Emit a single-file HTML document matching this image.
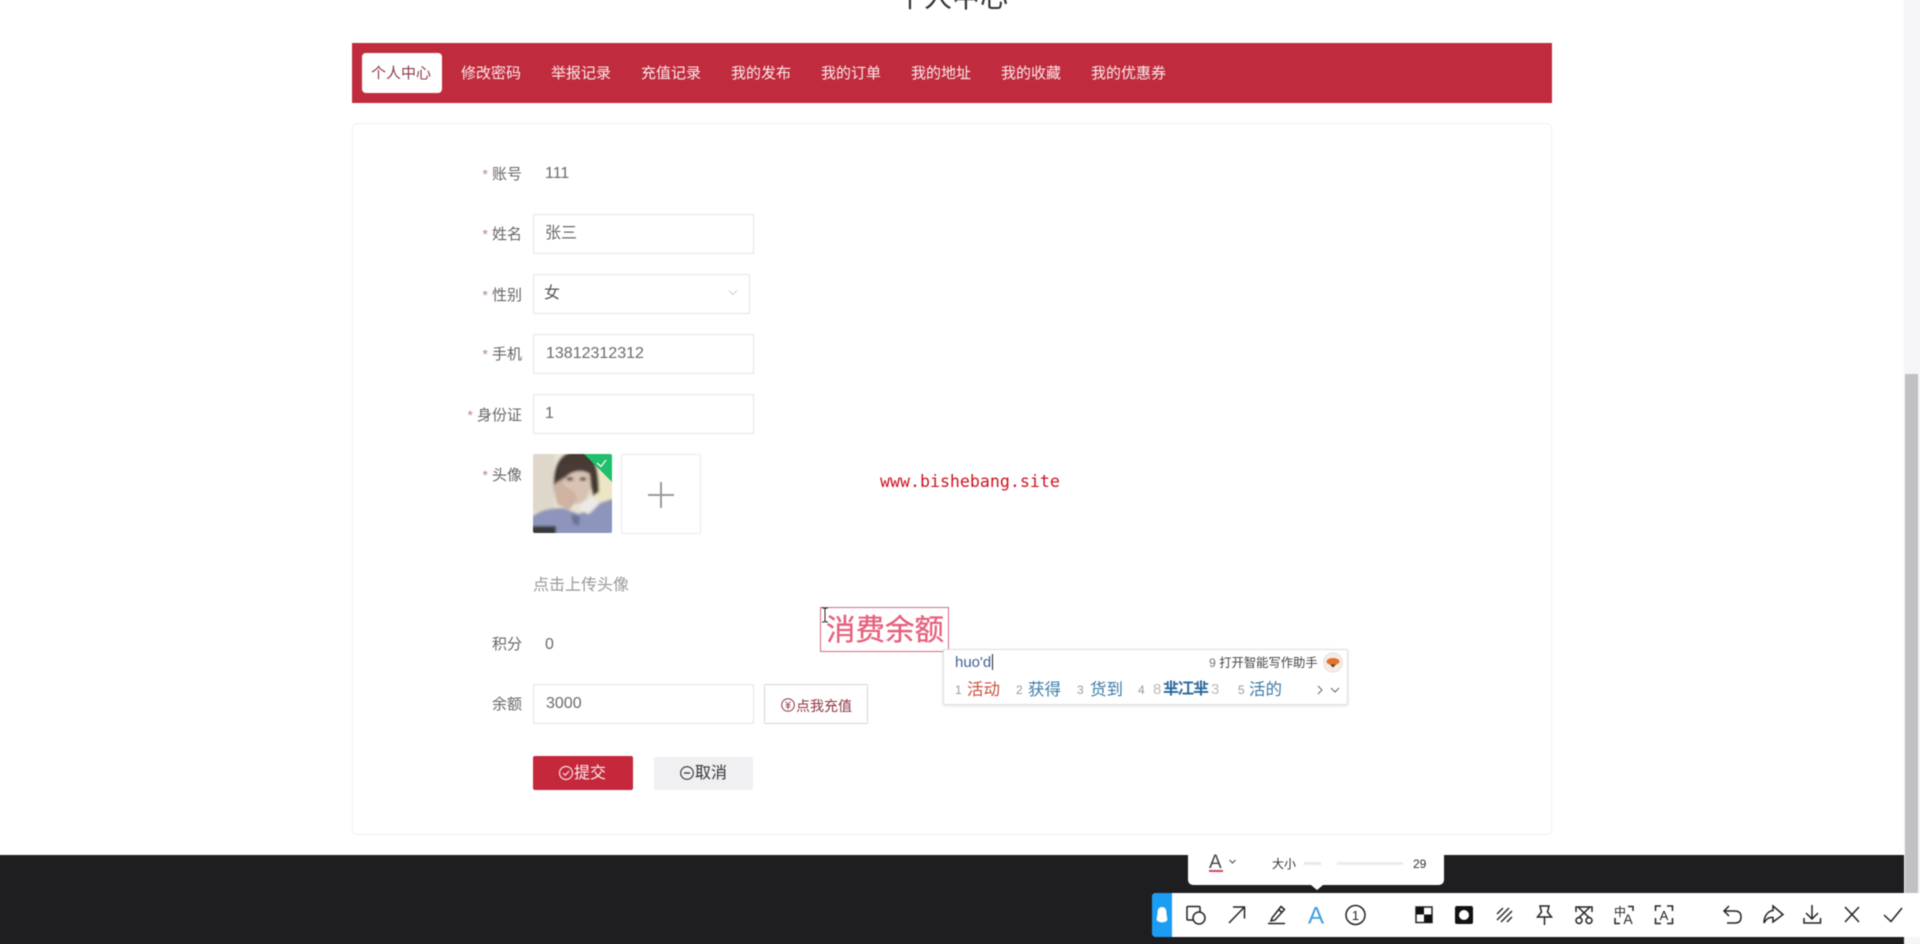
<!DOCTYPE html>
<html lang="zh">
<head>
<meta charset="utf-8">
<title>个人中心</title>
<style>
html,body{margin:0;padding:0;width:1920px;height:944px;overflow:hidden;background:#fff}
body{font-family:"Liberation Sans","Noto Sans CJK SC",sans-serif;position:relative;color:#606266}
#w{position:absolute;left:0;top:0;width:1920px;height:944px;filter:blur(.45px)}
.a{position:absolute;box-sizing:border-box}
.t{position:absolute;white-space:nowrap;line-height:24px;height:24px}
.nav{font-size:15px;color:#fbeaec}
.lb{font-size:15px;color:#666;text-align:right;width:80px;left:442px}
.lb i{font-style:normal;color:#b9838b;margin-right:4px;font-size:14px}
.in{border:1px solid #e2e3e8;background:#fff;border-radius:2px}
.v{font-size:16px;color:#6a6a6a}
.c{font-size:16.5px;line-height:24px}
.n{font-size:12px;color:#999}
.b{color:#3d7ba8}
</style>
</head>
<body>
<div id="w">
<div class="t" style="left:896px;top:-20px;font-size:28px;line-height:36px;height:36px;color:#333">个人中心</div>

<div class="a" style="left:352px;top:43px;width:1200px;height:60px;background:#c02c3d"></div>
<div class="a" style="left:362px;top:53px;width:80px;height:40px;background:#fff;border-radius:4px"></div>
<div class="t nav" style="left:371px;top:62px;color:#8f3a47">个人中心</div>
<div class="t nav" style="left:461px;top:62px">修改密码</div>
<div class="t nav" style="left:551px;top:62px">举报记录</div>
<div class="t nav" style="left:641px;top:62px">充值记录</div>
<div class="t nav" style="left:731px;top:62px">我的发布</div>
<div class="t nav" style="left:821px;top:62px">我的订单</div>
<div class="t nav" style="left:911px;top:62px">我的地址</div>
<div class="t nav" style="left:1001px;top:62px">我的收藏</div>
<div class="t nav" style="left:1091px;top:62px">我的优惠券</div>

<div class="a" style="left:352px;top:123px;width:1200px;height:712px;border:1px solid #f1f1f1;border-radius:5px;background:#fff"></div>

<div class="t lb" style="top:162px"><i>*</i>账号</div>
<div class="t v" style="left:545px;top:162px">111</div>

<div class="t lb" style="top:222px"><i>*</i>姓名</div>
<div class="a in" style="left:533px;top:214px;width:221px;height:40px"></div>
<div class="t v" style="left:545px;top:222px">张三</div>

<div class="t lb" style="top:283px"><i>*</i>性别</div>
<div class="a in" style="left:533px;top:274px;width:217px;height:40px"></div>
<div class="t v" style="left:544px;top:282px;color:#555">女</div>
<svg class="a" style="left:727px;top:288px" width="12" height="10"><path d="M2 2.5 6 6.5 10 2.5" fill="none" stroke="#d0d0d0" stroke-width="1"/></svg>

<div class="t lb" style="top:342px"><i>*</i>手机</div>
<div class="a in" style="left:533px;top:334px;width:221px;height:40px"></div>
<div class="t v" style="left:546px;top:342px">13812312312</div>

<div class="t lb" style="top:403px"><i>*</i>身份证</div>
<div class="a in" style="left:533px;top:394px;width:221px;height:40px"></div>
<div class="t v" style="left:545px;top:402px">1</div>

<div class="t lb" style="top:463px"><i>*</i>头像</div>
<svg class="a" style="left:533px;top:454px;border-radius:2px" width="79" height="79" viewBox="0 0 79 79">
<defs><filter id="f" x="-10%" y="-10%" width="120%" height="120%"><feGaussianBlur stdDeviation="1.3"/></filter><clipPath id="cp"><rect width="79" height="79"/></clipPath></defs>
<g clip-path="url(#cp)"><g filter="url(#f)">
<rect x="-3" y="-3" width="85" height="85" fill="#e8e2d2"/>
<rect x="-3" y="-3" width="24" height="60" fill="#ded7ca"/>
<rect x="58" y="-3" width="24" height="55" fill="#ece6c4"/>
<path d="M21 34C19 8 30-3 44-3S66 6 66 38L60 42 54 16 30 18 27 38Z" fill="#463733"/>
<path d="M30 14H56L58 32C56 44 50 50 44 50 36 50 30 42 29 30Z" fill="#d8c3b2"/>
<path d="M26 10H60L60 22C50 14 38 16 30 26Z" fill="#4a3a35"/>
<ellipse cx="37" cy="25" rx="3.500" ry="1.800" fill="#54423c"/><ellipse cx="50" cy="25" rx="3.500" ry="1.800" fill="#54423c"/>
<path d="M20 32 27 26 34 34 42 38 44 46 36 56 24 50Z" fill="#cdb3a0"/>
<path d="M-3 64C6 56 18 54 30 54L46 60 64 50 82 44V82H-3Z" fill="#8e95bc"/>
<path d="M46 50 62 43 66 50 56 60 48 57Z" fill="#eceae6"/>
<path d="M38 60 47 62 46 72 40 70Z" fill="#6d7299"/>
<rect x="-3" y="72" width="26" height="10" fill="#38393a"/>
</g>
<path d="M51 0H79V28Z" fill="#1fbf6b"/>
<path d="M64 9 68 12.5 73 6" fill="none" stroke="#fff" stroke-width="1.2"/></g>
</svg>
<div class="a" style="left:621px;top:454px;width:80px;height:80px;border:1px solid #eaeaea;border-radius:2px"></div>
<svg class="a" style="left:647px;top:481px" width="28" height="28"><path d="M14 1V27M1 14H27" stroke="#9a9a9a" stroke-width="2"/></svg>

<div class="t" style="left:880px;top:470px;font-family:'DejaVu Sans Mono','Liberation Mono',monospace;font-size:16.6px;color:#cf1320">www.bishebang.site</div>

<div class="t v" style="left:533px;top:574px;color:#999">点击上传头像</div>

<div class="t lb" style="top:633px">积分</div>
<div class="t v" style="left:545px;top:633px">0</div>

<div class="t lb" style="top:693px">余额</div>
<div class="a in" style="left:533px;top:684px;width:221px;height:40px"></div>
<div class="t v" style="left:546px;top:692px">3000</div>
<div class="a" style="left:764px;top:684px;width:104px;height:40px;border:1px solid #d4d4d8;border-radius:2px"></div>
<svg class="a" style="left:780px;top:697px" width="16" height="16"><circle cx="8" cy="8" r="6.3" fill="none" stroke="#8d3443" stroke-width="1"/><path d="M5.5 4.5 8 7.5 10.500 4.500M5.500 8H10.500M5.500 10H10.500M8 7.500V12.500" fill="none" stroke="#8d3443" stroke-width=".8"/></svg>
<div class="t" style="left:796px;top:694px;font-size:14px;color:#8d3443">点我充值</div>

<div class="a" style="left:533px;top:756px;width:100px;height:34px;background:#c4283a;border-radius:2px"></div>
<svg class="a" style="left:558px;top:765px" width="16" height="16"><circle cx="8" cy="8" r="6.500" fill="none" stroke="#f7dfe2" stroke-width="1.200"/><path d="M5 8 7.300 10.300 11 6" fill="none" stroke="#f7dfe2" stroke-width="1.200"/></svg>
<div class="t" style="left:574px;top:762px;font-size:16px;color:#fbeef0">提交</div>
<div class="a" style="left:654px;top:757px;width:99px;height:33px;background:#f0f0f3;border-radius:2px"></div>
<svg class="a" style="left:679px;top:765px" width="16" height="16"><circle cx="8" cy="8" r="6.300" fill="none" stroke="#333" stroke-width="1.100"/><path d="M5 8H11" stroke="#333" stroke-width="1.300"/></svg>
<div class="t" style="left:695px;top:762px;font-size:16px;color:#333">取消</div>

<div class="a" style="left:-10px;top:855px;width:1914px;height:99px;background:#1e1d20"></div>

<div class="a" style="left:1904px;top:-10px;width:26px;height:964px;background:#f5f4f6"></div>
<div class="a" style="left:1905px;top:374px;width:13px;height:519px;background:#c1c0c2"></div>

<div class="a" style="left:820px;top:607px;width:129px;height:45px;border:1px solid #d96a82"></div>
<div class="t" style="left:826px;top:611px;font-size:29.500px;line-height:40px;height:40px;color:#e65f7b;-webkit-text-stroke:.3px #e65f7b">消费余额</div>
<svg class="a" style="left:820px;top:606px" width="10" height="20"><path d="M2 2H4L5 3 6 2H8M5 3V15M2 16H4L5 15 6 16H8" fill="none" stroke="#222" stroke-width="1"/></svg>

<div class="a" style="left:943px;top:649px;width:405px;height:56px;background:#fff;border:1px solid #dcdfe3;box-shadow:0 1px 3px rgba(0,0,0,.12);border-radius:2px"></div>
<div class="t" style="left:955px;top:651px;font-size:15px;color:#3f5f9a">huo'd</div>
<div class="a" style="left:992px;top:654px;width:1px;height:16px;background:#222"></div>
<div class="t" style="left:1209px;top:651px;font-size:12.300px;color:#444"><span style="color:#777">9</span> 打开智能写作助手</div>
<svg class="a" style="left:1322px;top:652px" width="22" height="22"><circle cx="11" cy="10.500" r="9.500" fill="#f6ece4" stroke="#e6e0dc"/><ellipse cx="11" cy="9.500" rx="6.500" ry="3.500" fill="#e2742c"/><path d="M8 12.500H14L11 15.500Z" fill="#5a3a30"/></svg>
<div class="t n" style="left:955px;top:678px">1</div><div class="t c" style="left:967px;top:678px;color:#c9503f">活动</div>
<div class="t n" style="left:1016px;top:678px">2</div><div class="t c b" style="left:1028px;top:678px">获得</div>
<div class="t n" style="left:1077px;top:678px">3</div><div class="t c b" style="left:1090px;top:678px">货到</div>
<div class="t n" style="left:1138px;top:678px">4</div><div class="t n" style="left:1153px;top:678px;font-size:15px;color:#bbb">8</div>
<div class="t" style="left:1163px;top:678px;font-size:16px;font-weight:700;color:#27689c;letter-spacing:-1px">芈冮芈</div><div class="t n" style="left:1211px;top:678px;font-size:15px;color:#bbb">3</div>
<div class="t n" style="left:1238px;top:678px">5</div><div class="t c b" style="left:1249px;top:678px">活的</div>
<svg class="a" style="left:1315px;top:684px" width="28" height="12"><path d="M3 2 7 6 3 10" fill="none" stroke="#666"/><path d="M16 4 20 8 24 4" fill="none" stroke="#666"/></svg>

<div class="a" style="left:1188px;top:855px;width:256px;height:30px;background:#fff;border-radius:0 0 5px 5px"></div>
<div class="a" style="left:1311px;top:885px;width:0;height:0;border-left:6px solid transparent;border-right:6px solid transparent;border-top:5px solid #fff"></div>
<div class="t" style="left:1209px;top:851px;font-size:19px;line-height:24px;color:#444">A</div>
<div class="a" style="left:1209px;top:870px;width:14px;height:2px;background:#d0485e"></div>
<svg class="a" style="left:1228px;top:858px" width="10" height="8"><path d="M1.500 2 4.500 5 7.500 2" fill="none" stroke="#444"/></svg>
<div class="t" style="left:1272px;top:852px;font-size:12px;color:#333">大小</div>
<div class="a" style="left:1304px;top:862px;width:17px;height:3px;background:#e9e9e9"></div>
<div class="a" style="left:1337px;top:862px;width:66px;height:3px;background:#ececec"></div>
<div class="t" style="left:1413px;top:852px;font-size:12px;color:#333">29</div>

<div class="a" style="left:1152px;top:893px;width:778px;height:44px;background:#fff;border-radius:4px 0 0 4px"></div>
<div class="a" style="left:1152px;top:893px;width:20px;height:44px;background:#1c9cf2;border-radius:4px 0 0 4px"></div>
<svg class="a" style="left:0;top:0" width="1920" height="944" viewBox="0 0 1920 944">
<path d="M1162 907C1158.500 907 1157.500 910 1157.500 913 1157.500 917 1156 918 1157 920.500 1159 923 1165 923 1167 920.500 1168 918 1166.500 917 1166.500 913 1166.500 910 1165.500 907 1162 907Z" fill="#fff"/>
<g fill="none" stroke="#222" stroke-width="1.500">
<path d="M1193.500 920H1188Q1187 920 1187 919V907.500Q1187 906.500 1188 906.500H1199Q1200 906.500 1200 907.500V912"/>
<circle cx="1199" cy="918" r="6"/>
<path d="M1229 923 1244.500 907M1233 907H1244.500V918.500"/>
<path d="M1272 918 1281 906.500 1284.500 909.500 1275 920 1271 921ZM1278.500 909.500 1282 912.500M1268 923.500H1285"/>
<circle cx="1355.500" cy="915" r="9.500"/>
<path d="M1416 907H1432V922.500H1416Z"/>
<path d="M1497 914 1503 908M1497 920 1509 908M1501 922 1512 911M1507 922 1512 917" stroke-width="1.400"/>
<path d="M1540 906H1549L1547.500 912 1551.500 917H1537.500L1541.500 912ZM1544.500 917V925"/>
<path d="M1576 912V907H1592V912M1578 907 1589.500 918M1590 907 1578.500 918"/>
<circle cx="1579" cy="920.500" r="3"/><circle cx="1589" cy="920.500" r="3"/>
<path d="M1628 906.500H1633V911M1615 918V923.500H1620"/>
<path d="M1655.500 911V906H1661M1667 906H1672.500V911M1655.500 918V923.500H1661M1667 923.500H1672.500V918"/>
<path d="M1729 906 1724 911 1729 916M1724 911H1735Q1741 911 1741 917T1735 923H1727"/>
<path d="M1773 906 1783 914.500 1773 922V917.500C1769 917 1766 919 1764 923 1764 916 1768 911 1773 910.500Z"/>
<path d="M1812 905V919M1806 913 1812 919 1818 913M1804 918V923H1820.500V918" />
<path d="M1845 907 1859 922M1859 907 1845 922"/>
<path d="M1884 915 1891 921.500 1902 908"/>
</g>
<rect x="1416" y="907" width="8" height="7.500" fill="#111"/><rect x="1424" y="914.500" width="8" height="8" fill="#111"/>
<rect x="1455" y="906" width="18" height="18" rx="2" fill="#111"/><circle cx="1464" cy="915" r="5" fill="#fff"/>
<text x="1316" y="923.500" font-size="24" text-anchor="middle" fill="#3f9fe0" font-family="Liberation Sans">A</text>
<text x="1355.500" y="920" font-size="13" text-anchor="middle" fill="#222" font-family="Liberation Sans">1</text>
<text x="1614" y="916" font-size="12" fill="#222" font-family="Noto Sans CJK SC">中</text>
<text x="1628" y="924" font-size="14" text-anchor="middle" fill="#222" font-family="Liberation Sans">A</text>
<text x="1664" y="920" font-size="13" text-anchor="middle" fill="#222" font-family="Liberation Sans">A</text>
</svg>
</div>
</body>
</html>
